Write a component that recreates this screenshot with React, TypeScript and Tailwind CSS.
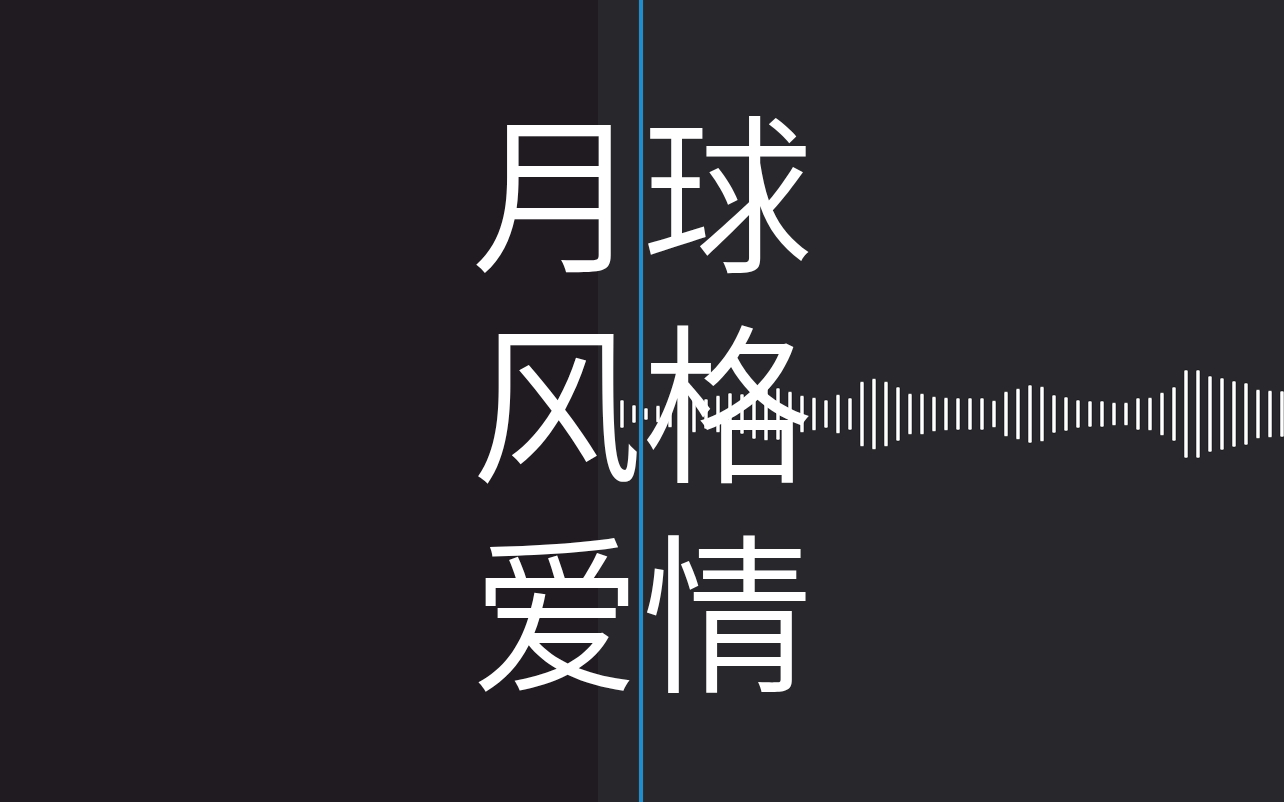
import React from 'react';

// waveform bar heights (px), one every 12px starting at x=611
const bars = [
  27, 28, 18, 12, 17, 27, 32, 37, 30, 37, 42, 40, 50, 53, 52, 45, 37, 33, 28, 39, 32, 65, 71, 65, 54, 41, 41, 35,
  33, 32, 32, 32, 27, 45, 51, 58, 55, 38, 34, 28, 26, 26, 23, 23, 32, 33, 43, 54, 88, 88, 76, 72, 66, 62, 49, 47, 46,
];

function Waveform() {
  return (
    <svg width={686} height={100} viewBox="0 0 686 100" className="block">
      {bars.map((h, i) => (
        <rect
          key={i}
          x={10 + i * 12}
          y={50 - h / 2}
          width={4}
          height={h}
          rx={1.2}
          fill="#ffffff"
          stroke="#050506"
          strokeOpacity={0.6}
          strokeWidth={0.8}
        />
      ))}
    </svg>
  );
}

export default function App() {
  const lines = ['月球', '风格', '爱情'];

  return (
    <div className="relative flex h-[802px] w-[1284px] overflow-hidden">
      {/* Left panel */}
      <div className="h-full w-[599px] bg-[#1f1b20]" />

      {/* Right panel: waveform + playhead */}
      <div className="relative flex h-full flex-1 flex-col justify-center bg-[#28272c] pt-[26px]">
        <Waveform />
        <div className="absolute top-0 bottom-0 left-[41px] w-[4px] bg-[#1a8fd4] shadow-[1px_0_0_#3a2b1e,-1px_0_0_#3a2b1e]" />
      </div>

      {/* Title overlay */}
      <div
        className="absolute inset-0 flex flex-col items-center justify-center pb-[12px] text-[171px] font-[350] leading-[210px] text-white"
        style={{ fontFamily: '"Noto Sans CJK SC", "Noto Sans", sans-serif' }}
      >
        {lines.map((l) => (
          <div key={l}>{l}</div>
        ))}
      </div>
    </div>
  );
}
